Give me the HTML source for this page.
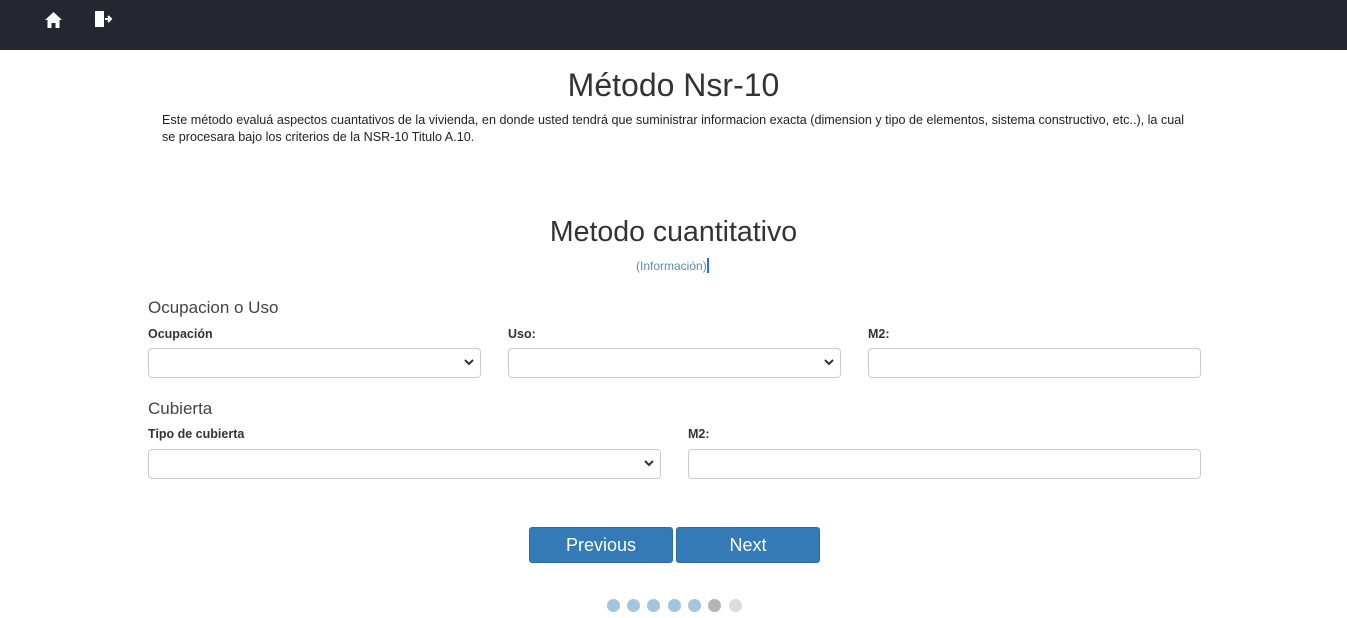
<!DOCTYPE html>
<html><head><meta charset="utf-8"><style>
body{margin:0;width:1347px;height:618px;background:#fff;font-family:"Liberation Sans",sans-serif;position:relative;overflow:hidden;color:#333}
.nav{position:absolute;left:0;top:0;width:1347px;height:50px;background:#262631}
.a{position:absolute;white-space:nowrap}
.lbl{font-size:12.5px;font-weight:bold;color:#333}
.sel,.inp{position:absolute;height:30px;border:1px solid #ccc;border-radius:4px;box-sizing:border-box;background:#fff}
.sel svg{position:absolute;right:6px;top:10px}
.btn{position:absolute;top:527px;height:36px;background:#337ab7;border:1px solid #2e6da4;border-radius:3px;box-sizing:border-box;color:#fff;font-size:18px;text-align:center;line-height:34px}
.dot{position:absolute;top:599px;width:13px;height:13px;border-radius:50%;background:#a4c5e0}
</style></head><body>
<div class="nav">
<svg style="position:absolute;left:44px;top:11px" width="19" height="18" viewBox="0 0 19 18"><path d="M9.5 1 L1 9 L3.5 9 L3.5 17 L7.5 17 L7.5 12 L11.5 12 L11.5 17 L15.5 17 L15.5 9 L18 9 Z" fill="#fff"/></svg>
<svg style="position:absolute;left:94px;top:10px" width="19" height="18" viewBox="0 0 19 18"><path d="M1 1 H10 V17 H1 Z M4 1 L10 3 V17" fill="#fff"/><path d="M11 9 H15 M14 6 L17 9 L14 12" stroke="#fff" stroke-width="2" fill="#fff"/></svg>
</div>
<div class="a" style="left:0;width:1347px;text-align:center;top:67px;font-size:32px;color:#333">Método Nsr-10</div>
<div class="a" style="left:162px;top:112px;font-size:12.6px;line-height:17px;color:#222;white-space:normal;width:1035px">Este método evaluá aspectos cuantativos de la vivienda, en donde usted tendrá que suministrar informacion exacta (dimension y tipo de elementos, sistema constructivo, etc..), la cual se procesara bajo los criterios de la NSR-10 Titulo A.10.</div>
<div class="a" style="left:0;width:1347px;text-align:center;top:216px;font-size:28.5px;color:#333">Metodo cuantitativo</div>
<div class="a" style="left:636px;top:258px;font-size:12px;color:#5a8ab8">(Información)<span style="display:inline-block;width:2px;height:15px;background:#1a73e8;vertical-align:-3px"></span></div>
<div class="a" style="left:148px;top:298px;font-size:17px;color:#444">Ocupacion o Uso</div>
<div class="a lbl" style="left:148px;top:327px">Ocupación</div>
<div class="a lbl" style="left:508px;top:327px">Uso:</div>
<div class="a lbl" style="left:868px;top:327px">M2:</div>
<div class="sel" style="left:148px;top:348px;width:333px"><svg width="10" height="7" viewBox="0 0 10 7"><path d="M1 1 L5 5 L9 1" stroke="#333" stroke-width="2" fill="none"/></svg></div>
<div class="sel" style="left:508px;top:348px;width:333px"><svg width="10" height="7" viewBox="0 0 10 7"><path d="M1 1 L5 5 L9 1" stroke="#333" stroke-width="2" fill="none"/></svg></div>
<div class="inp" style="left:868px;top:348px;width:333px"></div>
<div class="a" style="left:148px;top:399px;font-size:17px;color:#444">Cubierta</div>
<div class="a lbl" style="left:148px;top:427px">Tipo de cubierta</div>
<div class="a lbl" style="left:688px;top:427px">M2:</div>
<div class="sel" style="left:148px;top:449px;width:513px"><svg width="10" height="7" viewBox="0 0 10 7"><path d="M1 1 L5 5 L9 1" stroke="#333" stroke-width="2" fill="none"/></svg></div>
<div class="inp" style="left:688px;top:449px;width:513px"></div>
<div class="btn" style="left:529px;width:144px">Previous</div>
<div class="btn" style="left:676px;width:144px">Next</div>
<div class="dot" style="left:607px"></div>
<div class="dot" style="left:627px"></div>
<div class="dot" style="left:647px"></div>
<div class="dot" style="left:668px"></div>
<div class="dot" style="left:688px"></div>
<div class="dot" style="left:708px;background:#b5b5b5"></div>
<div class="dot" style="left:729px;background:#dcdcdc"></div>
</body></html>
